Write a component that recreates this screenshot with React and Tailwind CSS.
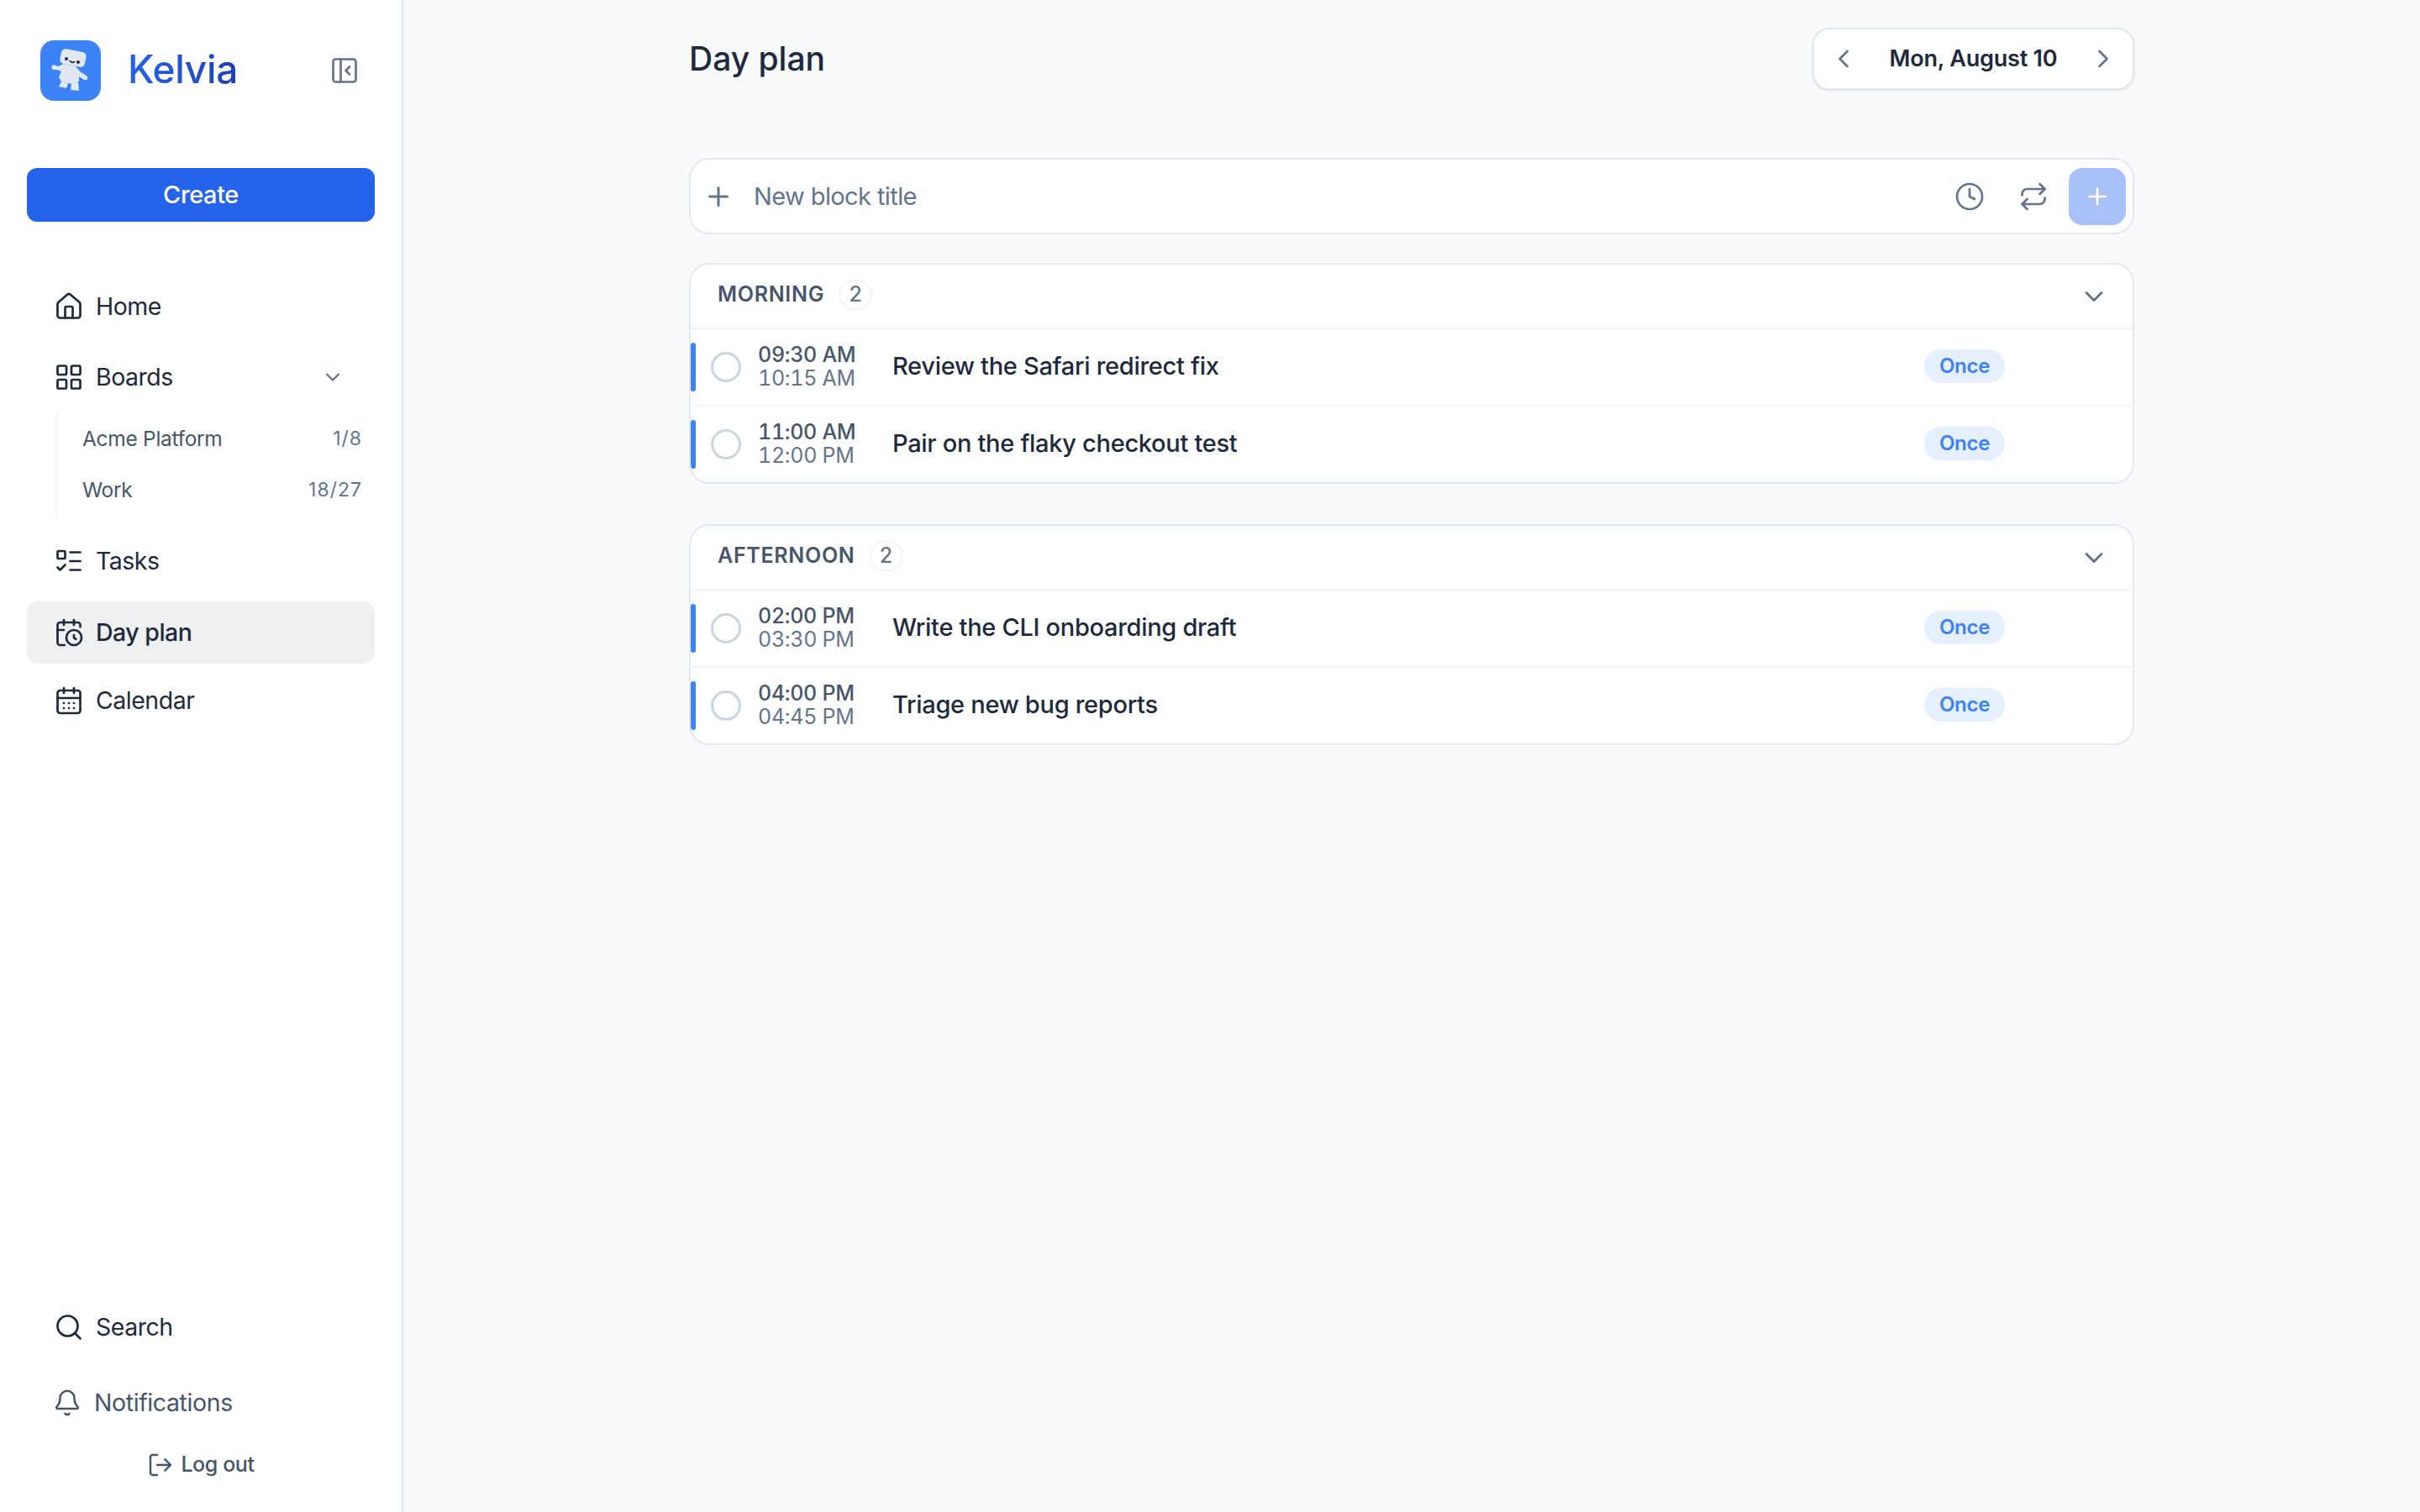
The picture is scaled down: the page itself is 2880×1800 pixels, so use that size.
import React from "react";
import {
  Bell,
  CalendarClock,
  CalendarDays,
  ChevronDown,
  ChevronLeft,
  ChevronRight,
  Clock,
  House,
  LayoutGrid,
  ListTodo,
  LogOut,
  PanelLeftClose,
  Plus,
  Repeat,
  Search,
} from "lucide-react";

const sections = [
  {
    title: "MORNING",
    blocks: [
      { start: "09:30 AM", end: "10:15 AM", title: "Review the Safari redirect fix" },
      { start: "11:00 AM", end: "12:00 PM", title: "Pair on the flaky checkout test" },
    ],
  },
  {
    title: "AFTERNOON",
    blocks: [
      { start: "02:00 PM", end: "03:30 PM", title: "Write the CLI onboarding draft" },
      { start: "04:00 PM", end: "04:45 PM", title: "Triage new bug reports" },
    ],
  },
];

const Robot = () => (
  <svg viewBox="0 0 72 72" className="w-[72px] h-[72px]">
    <g fill="#e2e8f0">
      <rect x="24" y="12" width="30" height="18" rx="5" transform="rotate(11 39 21)" />
      <path d="M13 32 L15 29 L21 31 L28 28 L42 31 L47 37 L56 43 L56 47 L52 47 L46 43 L46 49 L38 52 L25 49 L22 44 L25 37 L20 35 L15 35 Z" />
      <path d="M25 49 L33 51 L31 57 L22 55 Z" />
      <path d="M37 51 L45 50 L46 60 L36 59 Z" />
    </g>
    <circle cx="31" cy="22" r="2" fill="#1e293b" />
    <circle cx="45" cy="26" r="2" fill="#1e293b" />
    <path d="M35 24.5 q2.5 3 5.5 1" stroke="#1e293b" strokeWidth="1.6" fill="none" strokeLinecap="round" />
  </svg>
);

const NavItem = ({ icon: Icon, label, active, children }) => (
  <div
    className={`flex items-center h-[74px] px-[32px] gap-[14px] rounded-[14px] text-[28.5px] tracking-[-0.5px] text-[#1e293b] ${
      active ? "bg-[#eff0f2] font-medium" : ""
    }`}
  >
    <Icon strokeWidth={1.8} className="w-[36px] h-[36px] shrink-0" />
    <span>{label}</span>
    {children}
  </div>
);

const SubItem = ({ label, count }) => (
  <div className="flex items-center justify-between h-[61px] pl-[30px] pr-[15px] text-[24.5px] tracking-[-0.3px] text-[#475569]">
    <span>{label}</span>
    <span className="text-[23px] tracking-[1px] text-[#64748b]">{count}</span>
  </div>
);

const Sidebar = () => (
  <aside className="w-[480px] h-[1800px] shrink-0 flex flex-col bg-white border-r-[2px] border-[#e2e8f0] px-[32px]">
    <div className="flex items-center h-[72px] mt-[48px] pl-[16px]">
      <div className="w-[72px] h-[72px] rounded-[16px] bg-[#3b82f6]">
        <Robot />
      </div>
      <span className="ml-[32px] mb-[4px] text-[46px] tracking-[-0.3px] font-medium leading-none bg-gradient-to-r from-[#2563eb] to-[#1e40af] bg-clip-text text-transparent">
        Kelvia
      </span>
      <PanelLeftClose strokeWidth={1.8} className="ml-auto mr-[18px] w-[36px] h-[36px] text-[#64748b]" />
    </div>

    <button className="h-[64px] mt-[80px] rounded-[12px] bg-[#2563eb] text-[29px] tracking-[-0.4px] font-medium text-white">
      Create
    </button>

    <nav className="flex flex-col mt-[64px]">
      <NavItem icon={House} label="Home" />
      <div className="mt-[10px]">
        <NavItem icon={LayoutGrid} label="Boards">
          <ChevronDown className="ml-auto w-[28px] h-[28px] mr-[4px] text-[#64748b]" />
        </NavItem>
      </div>
      <div className="ml-[34px] mt-[6px] border-l-[2px] border-[#f1f5f9]">
        <SubItem label="Acme Platform" count="1/8" />
        <SubItem label="Work" count="18/27" />
      </div>
      <div className="mt-[17px]">
        <NavItem icon={ListTodo} label="Tasks" />
      </div>
      <div className="mt-[11px]">
        <NavItem icon={CalendarClock} label="Day plan" active />
      </div>
      <div className="mt-[7px]">
        <NavItem icon={CalendarDays} label="Calendar" />
      </div>
    </nav>

    <div className="mt-auto flex flex-col">
      <NavItem icon={Search} label="Search" />
      <div className="flex items-center h-[70px] mt-[18px] pl-[31px] gap-[15px] text-[28.5px] tracking-[-0.4px] text-[#475569]">
        <Bell strokeWidth={1.8} className="w-[34px] h-[34px]" />
        <span>Notifications</span>
      </div>
      <div className="flex items-center justify-center gap-[8px] h-[40px] mt-[19px] mb-[36px] text-[25px] tracking-[-0.4px] font-medium text-[#475569]">
        <LogOut strokeWidth={1.8} className="w-[32px] h-[32px]" />
        <span>Log out</span>
      </div>
    </div>
  </aside>
);

const Block = ({ block, last }) => (
  <div className={`flex items-center ${last ? "h-[90px]" : "h-[92px] border-b-[2px] border-[#f1f5f9]"}`}>
    <div className="w-[6px] h-[58px] rounded-full bg-[#3b82f6]" />
    <div className="ml-[18px] w-[36px] h-[36px] rounded-full border-[3px] border-[#cbd5e1]" />
    <div className="ml-[20px] w-[160px] mb-[3px] text-[25px] tracking-[-0.3px] leading-[28px] tabular-nums">
      <div className="font-medium text-[#475569]">{block.start}</div>
      <div className="text-[#64748b]">{block.end}</div>
    </div>
    <div className="flex-1 mb-[2px] text-[29px] tracking-[-0.3px] font-medium text-[#1e293b]">{block.title}</div>
    <div className="mr-[152px] mb-[2px] flex items-center justify-center w-[96px] h-[40px] rounded-full bg-[#e6effd] text-[24px] tracking-[-0.3px] font-semibold text-[#3b82f6]">
      Once
    </div>
  </div>
);

const Section = ({ section }) => (
  <section className="rounded-[24px] border-[2px] border-[#e2e8f0] bg-white overflow-hidden">
    <div className="flex items-center h-[77px] border-b-[2px] border-[#f1f5f9] pl-[32px] pr-[28px]">
      <span className="mb-[4px] text-[25px] font-semibold tracking-[0.7px] text-[#475569]">{section.title}</span>
      <span className="mb-[3px] ml-[17px] flex items-center justify-center w-[40px] h-[36px] rounded-full border-[2px] border-[#f1f5f9] text-[25px] font-medium text-[#64748b]">
        {section.blocks.length}
      </span>
      <ChevronDown className="ml-auto w-[36px] h-[36px] text-[#64748b]" />
    </div>
    {section.blocks.map((block, i) => (
      <Block key={block.title} block={block} last={i === section.blocks.length - 1} />
    ))}
  </section>
);

export default function App() {
  return (
    <div className="flex h-[1800px] bg-[#f8fafc] font-['Inter',sans-serif]">
      <Sidebar />
      <main className="flex-1">
        <div className="w-[1720px] mx-auto">
          <div className="flex items-center justify-between h-[74px] mt-[33px]">
            <h1 className="text-[39px] font-medium text-[#1e293b]">Day plan</h1>
            <div className="flex items-center justify-between w-[383px] h-[74px] px-[17px] rounded-[20px] border-[2px] border-[#e2e8f0] bg-white shadow-sm">
              <ChevronLeft strokeWidth={1.8} className="w-[36px] h-[36px] text-[#64748b]" />
              <span className="text-[27px] tracking-[-0.2px] font-semibold text-[#1e293b]">Mon, August 10</span>
              <ChevronRight strokeWidth={1.8} className="w-[36px] h-[36px] text-[#64748b]" />
            </div>
          </div>

          <div className="flex items-center h-[91px] mt-[81px] pl-[15px] pr-[8px] rounded-[24px] border-[2px] border-[#e2e8f0] bg-white">
            <Plus className="w-[36px] h-[36px] text-[#64748b]" />
            <span className="ml-[24px] text-[29px] tracking-[-0.6px] text-[#64748b]">New block title</span>
            <Clock strokeWidth={1.8} className="ml-auto w-[36px] h-[36px] text-[#64748b]" />
            <Repeat strokeWidth={1.8} className="ml-[40px] w-[36px] h-[36px] text-[#64748b]" />
            <div className="ml-[24px] flex items-center justify-center w-[68px] h-[68px] rounded-[16px] bg-[#a8c1f7]">
              <Plus className="w-[32px] h-[32px] text-white" />
            </div>
          </div>

          <div className="flex flex-col gap-[48px] mt-[34px]">
            {sections.map((section) => (
              <Section key={section.title} section={section} />
            ))}
          </div>
        </div>
      </main>
    </div>
  );
}
